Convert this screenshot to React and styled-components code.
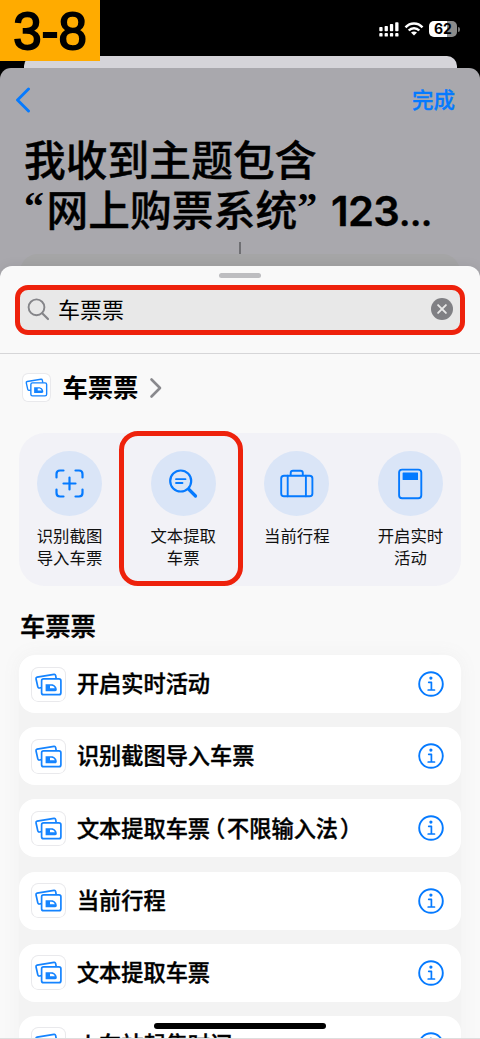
import React from "react";
import styled, { createGlobalStyle } from "styled-components";

const BLUE = "#057aff";
const RED = "#ee220c";

const GlobalStyle = createGlobalStyle`
  * { box-sizing: border-box; }
  body {
    margin: 0;
    background: #000;
    font-family: Inter, "Noto Sans CJK SC", sans-serif;
    color: #000;
  }
`;

const Screen = styled.div`
  position: relative;
  width: 480px;
  height: 1039px;
  overflow: hidden;
  background: #000;
  display: flex;
  flex-direction: column;
`;

const StepBadge = styled.div`
  position: absolute;
  top: 0;
  left: 0;
  z-index: 5;
  width: 100px;
  height: 61px;
  background: #ffab00;
  display: flex;
  justify-content: center;
  padding-top: 2px;
  font: 400 51px/60px "Liberation Sans", sans-serif;
  -webkit-text-stroke: 1.8px #000;
`;

const StatusBar = styled.div`
  height: 56px;
  flex: none;
  display: flex;
  justify-content: flex-end;
  align-items: flex-start;
  gap: 5px;
  padding: 21px 20px 0 0;
`;

const Battery = styled.div`
  display: flex;
  align-items: center;
  gap: 1px;
`;

const BatteryBody = styled.div`
  width: 28px;
  height: 16px;
  border-radius: 5px;
  background: linear-gradient(90deg, #fff 64%, #8b8b8b 64%);
  font: 700 14px/16px Inter, sans-serif;
  text-align: center;
`;

const BatteryNub = styled.div`
  width: 2px;
  height: 5px;
  border-radius: 0 2px 2px 0;
  background: #777;
`;

const BackCard = styled.div`
  flex: none;
  height: 11.5px;
  margin: 0 23px 0 23.5px;
  background: #d5d4d9;
  border-radius: 10px 10px 0 0;
`;

const Editor = styled.div`
  flex: none;
  height: 214px;
  background: #a9a8ad;
  border-radius: 11px 11px 0 0;
  display: flex;
  flex-direction: column;
`;

const NavBar = styled.div`
  flex: none;
  display: flex;
  justify-content: space-between;
  align-items: center;
  height: 64px;
  padding: 0 25px 0 15px;
`;

const DoneButton = styled.span`
  color: ${BLUE};
  font-size: 21.5px;
  font-weight: 500;
  line-height: 30px;
  -webkit-text-stroke: 0.3px ${BLUE};
`;

const Title = styled.h1`
  flex: none;
  height: 99px;
  margin: 4px 0 0 24px;
  font-size: 41.7px;
  line-height: 50.3px;
  font-weight: 500;
  letter-spacing: 0.1px;
  white-space: nowrap;
  -webkit-text-stroke: 0.4px #000;
`;

const Quote = styled.span`
  display: inline-block;
  width: ${(p) => p.$width}px;
  font-family: "Liberation Serif", serif;
  font-weight: 700;
  font-size: 40px;
  line-height: 0;
  vertical-align: 6px;
  -webkit-text-stroke: 0;
`;

const Latin = styled.span`
  font-weight: 600;
  letter-spacing: -0.6px;
  line-height: 0;
`;

const Ellipsis = styled.span`
  font-size: 31px;
  font-weight: 800;
`;

const Connector = styled.div`
  width: 2px;
  height: 12px;
  margin: 7px auto 0;
  background: #6f6f73;
  flex: none;
`;

const ActionCard = styled.div`
  flex: none;
  height: 28px;
  margin: 0 20px;
  border-radius: 18px 18px 0 0;
  background: #a5a5a6;
`;

const Sheet = styled.div`
  position: relative;
  flex: 1;
  min-height: 0;
  margin-top: -16px;
  background: #f9f9f9;
  border-radius: 12px 12px 0 0;
  box-shadow: 0 0 12px rgba(0, 0, 0, 0.08);
  display: flex;
  flex-direction: column;
  overflow: hidden;
`;

const Grabber = styled.div`
  flex: none;
  width: 42px;
  height: 5.5px;
  border-radius: 3px;
  margin: 7px auto 0;
  background: #bdbdc0;
`;

const SearchArea = styled.div`
  flex: none;
  height: 76px;
  padding: 7px 15px 0;
  border-bottom: 1px solid #d6d6d8;
`;

const SearchField = styled.div`
  height: 49.5px;
  border: 5px solid ${RED};
  border-radius: 13px;
  background: #e8e8e8;
  display: flex;
  align-items: center;
  padding: 0 7px 1px 7px;
  gap: 8px;
`;

const Query = styled.span`
  flex: 1;
  padding-top: 1px;
  font-size: 22px;
  line-height: 32px;
`;

const AppLink = styled.div`
  flex: none;
  height: 79px;
  display: flex;
  align-items: center;
  padding: 0 0 12px 22.5px;
`;

const AppName = styled.span`
  margin: 0 11px 0 13px;
  font-size: 25.3px;
  font-weight: 700;
  line-height: 36px;
`;

const Tile = styled.div`
  flex: none;
  width: ${(p) => p.$size}px;
  height: ${(p) => p.$size}px;
  border-radius: ${(p) => p.$size * 0.19}px;
  background: #fff;
  box-shadow: 0 0 0 1px #e9e9ec;
  display: flex;
`;

const Shortcuts = styled.div`
  flex: none;
  height: 153px;
  margin: 0 19px;
  border-radius: 26px;
  background: #f2f2f7;
  display: flex;
  justify-content: space-between;
  padding: 0 12.5px 0 12.5px;
`;

const Shortcut = styled.div`
  position: relative;
  width: 76px;
  padding-top: 18px;
  display: flex;
  flex-direction: column;
  align-items: center;
`;

const Highlight = styled.div`
  position: absolute;
  top: -2px;
  left: -26.5px;
  width: 124px;
  height: 154.5px;
  border: 5px solid ${RED};
  border-radius: 19px;
`;

const Disc = styled.div`
  width: 65px;
  height: 65px;
  border-radius: 50%;
  background: #dae5f7;
  display: flex;
`;

const Caption = styled.div`
  margin-top: 9px;
  font-size: 16.4px;
  line-height: 22px;
  text-align: center;
  white-space: pre;
  color: #111;
`;

const SectionTitle = styled.h2`
  flex: none;
  margin: 23px 0 10px 20px;
  font-size: 25.3px;
  line-height: 36px;
  font-weight: 500;
  -webkit-text-stroke: 0.5px #000;
`;

const List = styled.div`
  flex: none;
  margin: 0 19px;
  display: flex;
  flex-direction: column;
  gap: 14.2px;
  border-radius: 16px;
  background: #f3f3f3;
  box-shadow: 0 0 16px 3px #f3f3f3;
`;

const Row = styled.div`
  height: 58px;
  border-radius: 16px;
  background: #fff;
  display: flex;
  align-items: center;
  padding: 0 17px 0 12.5px;
`;

const RowLabel = styled.span`
  flex: 1;
  margin-left: 12.4px;
  padding-top: 0.5px;
  font-size: 22.2px;
  line-height: 32px;
  font-weight: 500;
  -webkit-text-stroke: 0.4px #000;
`;

const Paren = styled.span`
  font-family: "Noto Sans CJK SC", sans-serif;
  font-feature-settings: "halt";
  line-height: 0;
  margin: 0 ${(p) => p.$after || 0}px 0 ${(p) => p.$before || 0}px;
`;

const HomeIndicator = styled.div`
  position: absolute;
  left: 154px;
  bottom: 10px;
  width: 172px;
  height: 6px;
  border-radius: 3px;
  background: #000;
`;

const BottomEdge = styled.div`
  position: absolute;
  left: 0;
  right: 0;
  bottom: 0;
  height: 1px;
  background: #dedede;
`;

const Signal = () => (
  <svg width="20" height="16" viewBox="0 0 20 16" fill="#fff">
    {[6, 5, 3, 1.2].map((y, i) => (
      <g key={i}>
        <rect x={0.3 + i * 5.3} y={y} width="3.3" height={10.3 - y} rx="0.8" />
        <rect x={0.3 + i * 5.3} y="12" width="3.3" height="3.6" rx="0.9" />
      </g>
    ))}
  </svg>
);

const Wifi = () => (
  <svg width="20" height="16" viewBox="0 0 20 16" fill="none" stroke="#fff" strokeWidth="2.5">
    <path d="M1.5 6.3C6.2 1.2 13.8 1.2 18.5 6.3" />
    <path d="M4.7 9.5C7.7 6.4 12.3 6.4 15.3 9.5" />
    <path d="M10 14.6L7 11.6C8.7 10 11.3 10 13 11.6Z" fill="#fff" stroke="none" />
  </svg>
);

const BackIcon = () => (
  <svg width="16" height="26" viewBox="0 0 16 26" fill="none" stroke={BLUE} strokeWidth="2.9" strokeLinecap="round" strokeLinejoin="round">
    <path d="M13.5 2L2.5 13L13.5 24" />
  </svg>
);

const SearchIcon = () => (
  <svg width="23" height="23" viewBox="0 0 23 23" fill="none" stroke="#858589" strokeWidth="1.9" strokeLinecap="round">
    <circle cx="9.5" cy="9.3" r="7.9" />
    <path d="M15.2 15.2L21 21" strokeWidth="2.2" />
  </svg>
);

const ClearIcon = () => (
  <svg width="22" height="22" viewBox="0 0 22 22">
    <circle cx="11" cy="11" r="11" fill="#808084" />
    <path d="M7.1 7.1L14.9 14.9M14.9 7.1L7.1 14.9" stroke="#e8e8e8" strokeWidth="1.9" strokeLinecap="round" />
  </svg>
);

const ChevronIcon = () => (
  <svg width="14" height="22" viewBox="0 0 14 22" fill="none" stroke="#89898d" strokeWidth="2.6" strokeLinecap="round" strokeLinejoin="round">
    <path d="M2.5 2.5L11 11L2.5 19.5" />
  </svg>
);

const TicketIcon = () => (
  <svg width="100%" height="100%" viewBox="0 0 33 33" fill="none" stroke="#1584ff" strokeWidth="1.7" strokeLinejoin="round">
    <path d="M24.2 10.5L23.6 7.4Q23.3 6.2 22 6.4L5.1 9.2Q3.8 9.5 4 10.8L5.8 18.9Q6.1 20.2 7.4 20L9.5 19.7" />
    <rect x="9.6" y="10.8" width="19.3" height="15.9" rx="2" />
    <path fillRule="evenodd" fill="#1584ff" stroke="none" d="M13.6 16.3H19.5C22.5 16.3 24.8 19 24.8 21.5C24.8 22.7 24.2 23.2 23.2 23.2H13.6ZM18 17.8V20.2H22.8C22 18.6 20.8 17.8 19.5 17.8Z" />
  </svg>
);

const InfoIcon = () => (
  <svg width="26" height="26" viewBox="0 0 26 26" fill="none" stroke={BLUE}>
    <circle cx="13" cy="13" r="11.8" strokeWidth="1.9" />
    <circle cx="12.9" cy="7.1" r="1.6" fill={BLUE} stroke="none" />
    <path d="M10.7 11.3H13.4V18.9M10.2 19H16.5" strokeWidth="1.7" strokeLinecap="round" strokeLinejoin="round" />
  </svg>
);

const DiscSvg = ({ children }) => (
  <svg width="65" height="65" viewBox="0 0 65 65" fill="none" stroke={BLUE} strokeWidth="2.2" strokeLinecap="round" strokeLinejoin="round">
    {children}
  </svg>
);

const ScanIcon = () => (
  <DiscSvg>
    <path d="M19.5 26.5V23Q19.5 19.5 23 19.5H26.5M38.5 19.5H42Q45.5 19.5 45.5 23V26.5M45.5 38.5V42Q45.5 45.5 42 45.5H38.5M26.5 45.5H23Q19.5 45.5 19.5 42V38.5" />
    <path d="M32.5 26.5V38.5M26.5 32.5H38.5" />
  </DiscSvg>
);

const TextSearchIcon = () => (
  <DiscSvg>
    <circle cx="29.7" cy="30" r="10.5" />
    <path d="M25 28.2H34.5M25 32H31.5" strokeWidth="1.8" />
    <path d="M38 38.5L44.5 45" strokeWidth="3.2" />
  </DiscSvg>
);

const SuitcaseIcon = () => (
  <DiscSvg>
    <g strokeWidth="1.9">
      <rect x="17.2" y="24.7" width="31.2" height="20.6" rx="2.8" />
      <path d="M23.7 24.7V45.3M41.9 24.7V45.3M26.7 24V22Q26.7 19.7 29 19.7H36.5Q38.8 19.7 38.8 22V24" />
    </g>
  </DiscSvg>
);

const PhoneIcon = () => (
  <DiscSvg>
    <rect x="21.1" y="18.6" width="22.2" height="28.6" rx="3" strokeWidth="1.9" />
    <rect x="24.6" y="21.6" width="15.4" height="7.4" rx="0.5" fill={BLUE} stroke="none" />
  </DiscSvg>
);

const shortcuts = [
  { icon: ScanIcon, label: "识别截图\n导入车票" },
  { icon: TextSearchIcon, label: "文本提取\n车票", highlighted: true },
  { icon: SuitcaseIcon, label: "当前行程" },
  { icon: PhoneIcon, label: "开启实时\n活动" },
];

const actions = [
  "开启实时活动",
  "识别截图导入车票",
  <>文本提取车票<Paren $before={4} $after={2}>（</Paren>不限输入法<Paren $before={2}>）</Paren></>,
  "当前行程",
  "文本提取车票",
  "火车站起售时间",
];

export default function App() {
  return (
    <>
      <GlobalStyle />
      <Screen>
        <StepBadge>3-8</StepBadge>
        <StatusBar>
          <Signal />
          <Wifi />
          <Battery>
            <BatteryBody>62</BatteryBody>
            <BatteryNub />
          </Battery>
        </StatusBar>
        <BackCard />
        <Editor>
          <NavBar>
            <BackIcon />
            <DoneButton>完成</DoneButton>
          </NavBar>
          <Title>
            我收到主题包含
            <br />
            <Quote $width={22.5}>“</Quote>网上购票系统<Quote $width={22.5}>”</Quote>{" "}
            <Latin>123<Ellipsis>…</Ellipsis></Latin>
          </Title>
          <Connector />
          <ActionCard />
        </Editor>
        <Sheet>
          <Grabber />
          <SearchArea>
            <SearchField>
              <SearchIcon />
              <Query>车票票</Query>
              <ClearIcon />
            </SearchField>
          </SearchArea>
          <AppLink>
            <Tile $size={27}>
              <TicketIcon />
            </Tile>
            <AppName>车票票</AppName>
            <ChevronIcon />
          </AppLink>
          <Shortcuts>
            {shortcuts.map(({ icon: Icon, label, highlighted }) => (
              <Shortcut key={label}>
                <Disc>
                  <Icon />
                </Disc>
                <Caption>{label}</Caption>
                {highlighted && <Highlight />}
              </Shortcut>
            ))}
          </Shortcuts>
          <SectionTitle>车票票</SectionTitle>
          <List>
            {actions.map((label, i) => (
              <Row key={i}>
                <Tile $size={33}>
                  <TicketIcon />
                </Tile>
                <RowLabel>{label}</RowLabel>
                <InfoIcon />
              </Row>
            ))}
          </List>
        </Sheet>
        <HomeIndicator />
        <BottomEdge />
      </Screen>
    </>
  );
}
